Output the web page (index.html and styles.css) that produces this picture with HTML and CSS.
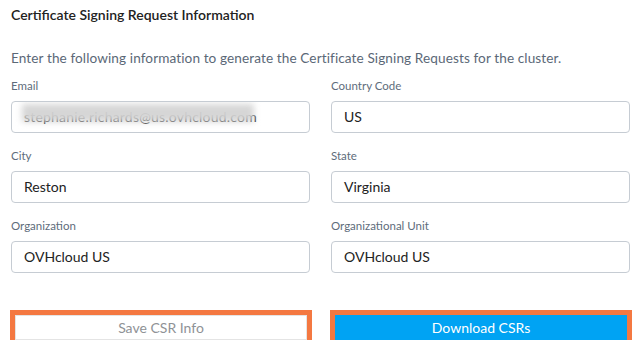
FILE: index.html
```html
<!DOCTYPE html>
<html lang="en">
<head>
    <meta charset="UTF-8">
    <meta name="viewport" content="width=device-width, initial-scale=1.0">
    <title>Certificate Signing Request Information</title>
    <link rel="stylesheet" href="styles.css">
</head>
<body>
    <div class="panel">
        <h2 class="title">Certificate Signing Request Information</h2>
        <p class="intro">Enter the following information to generate the Certificate Signing Requests for the cluster.</p>

        <form class="csr-form">
            <div class="field">
                <label>Email</label>
                <div class="input masked">
                    <span>stephanie.richards@us.ovhcloud.com</span>
                    <div class="blur"></div>
                </div>
            </div>
            <div class="field">
                <label>Country Code</label>
                <div class="input">US</div>
            </div>
            <div class="field">
                <label>City</label>
                <div class="input">Reston</div>
            </div>
            <div class="field">
                <label>State</label>
                <div class="input">Virginia</div>
            </div>
            <div class="field">
                <label>Organization</label>
                <div class="input">OVHcloud US</div>
            </div>
            <div class="field">
                <label>Organizational Unit</label>
                <div class="input">OVHcloud US</div>
            </div>
        </form>

        <div class="actions">
            <button class="btn btn-outline" type="button">Save CSR Info</button>
            <button class="btn btn-primary" type="button">Download CSRs</button>
        </div>
    </div>
</body>
</html>
```

FILE: styles.css
```css
* {
    margin: 0;
    padding: 0;
    box-sizing: border-box;
    font-family: Lato, "Open Sans", sans-serif;
}

body {
    background-color: white;
}

.panel {
    padding: 7px 13px 0 11px;
}

.title {
    color: #222;
    font-size: 14px;
    font-weight: 600;
    line-height: 16px;
}

.intro {
    color: #5b6877;
    font-size: 13.6px;
    line-height: 18px;
    margin-top: 26px;
    letter-spacing: 0.1px;
}

.csr-form {
    display: grid;
    grid-template-columns: 1fr 1fr;
    column-gap: 21px;
    row-gap: 16px;
    margin-top: 12px;
}

.field label {
    display: block;
    color: #5e6c7b;
    font-size: 11.5px;
    line-height: 14px;
    margin-bottom: 8px;
}

.input {
    position: relative;
    height: 32px;
    border: 1px solid #c6ccd3;
    border-radius: 4px;
    padding: 0 12px;
    font-size: 14px;
    line-height: 30px;
    color: #222;
    overflow: hidden;
}

.masked span {
    color: #333;
    letter-spacing: 0.2px;
}

.masked .blur {
    position: absolute;
    left: 10px;
    top: 2px;
    width: 232px;
    height: 18px;
    background: rgba(212, 212, 212, 0.95);
    filter: blur(3px);
}

.actions {
    display: grid;
    grid-template-columns: 1fr 1fr;
    column-gap: 21px;
    margin-top: 42px;
}

.btn {
    height: 25px;
    font-size: 14px;
    border: none;
    cursor: pointer;
    outline: 5px solid #f47841;
    outline-offset: 0;
    margin: 0 3px 0 4px;
}

.btn-outline {
    background-color: white;
    color: #8f9296;
    border: 1px solid #e4e4e4;
}

.btn-primary {
    background-color: #00a3f3;
    color: white;
}
```
